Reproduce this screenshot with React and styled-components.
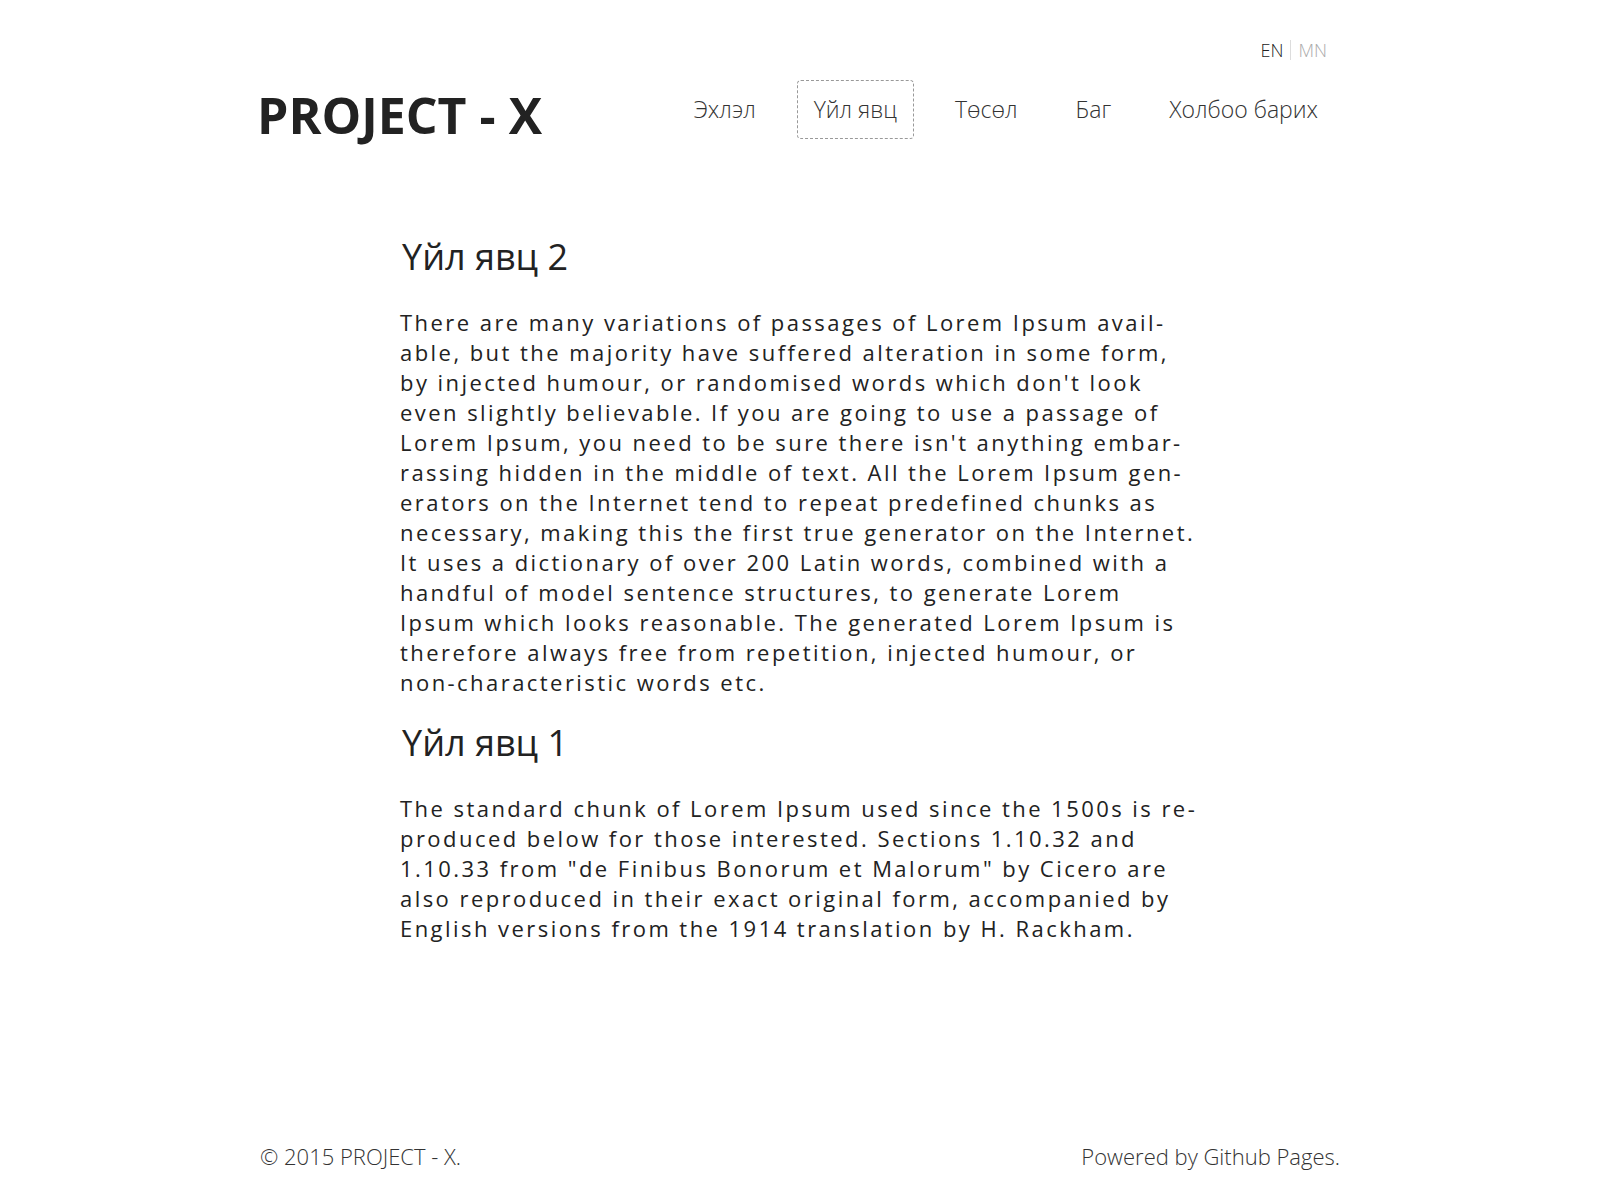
import styled, { createGlobalStyle } from 'styled-components'

const GlobalStyle = createGlobalStyle`
  html, body {
    margin: 0;
    padding: 0;
    background: #fff;
  }
  body {
    font-family: 'Open Sans', 'Noto Sans', 'DejaVu Sans', sans-serif;
    color: #222;
  }
`

const Page = styled.div`
  display: flex;
  flex-direction: column;
  min-height: 100vh;
  width: 1080px;
  margin: 0 auto;
`

const TopBar = styled.div`
  display: flex;
  justify-content: flex-end;
  padding: 40px 13px 0 0;
`

const Lang = styled.a`
  font-size: 18px;
  line-height: 20px;
  font-weight: 300;
  color: ${p => (p.$active ? '#222' : '#aaa')};
  padding: 0 7px;
  text-decoration: none;
  & + & {
    border-left: 1px solid #ddd;
  }
  &:last-child {
    padding-right: 0;
  }
`

const Header = styled.header`
  display: flex;
  justify-content: space-between;
  align-items: flex-start;
  margin-top: 20px;
`

const Logo = styled.h1`
  margin: 11px 0 0 -3px;
  font-size: 50px;
  line-height: 48px;
  font-weight: 700;
  color: #222;
`

const Nav = styled.nav`
  display: flex;
  gap: 24px;
  margin-right: 5px;
`

const NavItem = styled.a`
  display: block;
  padding: 0 16px;
  font-size: 23px;
  line-height: 57px;
  font-weight: 300;
  color: #333;
  text-decoration: none;
  border: 1px dashed ${p => (p.$active ? '#999' : 'transparent')};
  border-radius: 4px;
`

const Main = styled.main`
  width: 800px;
  margin: 96px auto 0;
`

const Heading = styled.h2`
  margin: 0 0 28px;
  padding-left: 2px;
  font-size: 36px;
  line-height: 44px;
  font-weight: 400;
  color: #222;
`

const Paragraph = styled.p`
  margin: 0 0 24px;
  font-size: 22px;
  line-height: 30px;
  letter-spacing: 2.45px;
  color: #222;
`

const Line = styled.span`
  display: block;
  white-space: nowrap;
`

const Footer = styled.footer`
  display: flex;
  justify-content: space-between;
  margin-top: auto;
  padding-bottom: 32px;
  font-size: 22px;
  line-height: 24px;
  font-weight: 300;
  color: #333;
`

const first = [
  'There are many variations of passages of Lorem Ipsum avail-',
  'able, but the majority have suffered alteration in some form,',
  "by injected humour, or randomised words which don't look",
  'even slightly believable. If you are going to use a passage of',
  "Lorem Ipsum, you need to be sure there isn't anything embar-",
  'rassing hidden in the middle of text. All the Lorem Ipsum gen-',
  'erators on the Internet tend to repeat predefined chunks as',
  'necessary, making this the first true generator on the Internet.',
  'It uses a dictionary of over 200 Latin words, combined with a',
  'handful of model sentence structures, to generate Lorem',
  'Ipsum which looks reasonable. The generated Lorem Ipsum is',
  'therefore always free from repetition, injected humour, or',
  'non-characteristic words etc.',
]

const second = [
  'The standard chunk of Lorem Ipsum used since the 1500s is re-',
  'produced below for those interested. Sections 1.10.32 and',
  '1.10.33 from "de Finibus Bonorum et Malorum" by Cicero are',
  'also reproduced in their exact original form, accompanied by',
  'English versions from the 1914 translation by H. Rackham.',
]

const navLinks = ['Эхлэл', 'Үйл явц', 'Төсөл', 'Баг', 'Холбоо барих']

const App = () => {
  return (
    <>
      <GlobalStyle />
      <Page>
        <TopBar>
          <Lang href='#' $active>EN</Lang>
          <Lang href='#'>MN</Lang>
        </TopBar>
        <Header>
          <Logo>PROJECT - X</Logo>
          <Nav>
            {navLinks.map(link => (
              <NavItem key={link} href='#' $active={link === 'Үйл явц'}>
                {link}
              </NavItem>
            ))}
          </Nav>
        </Header>
        <Main>
          <Heading>Үйл явц 2</Heading>
          <Paragraph>
            {first.map((l, i) => <Line key={i}>{l}</Line>)}
          </Paragraph>
          <Heading>Үйл явц 1</Heading>
          <Paragraph>
            {second.map((l, i) => <Line key={i}>{l}</Line>)}
          </Paragraph>
        </Main>
        <Footer>
          <span>© 2015 PROJECT - X.</span>
          <span>Powered by Github Pages.</span>
        </Footer>
      </Page>
    </>
  )
}

export default App
